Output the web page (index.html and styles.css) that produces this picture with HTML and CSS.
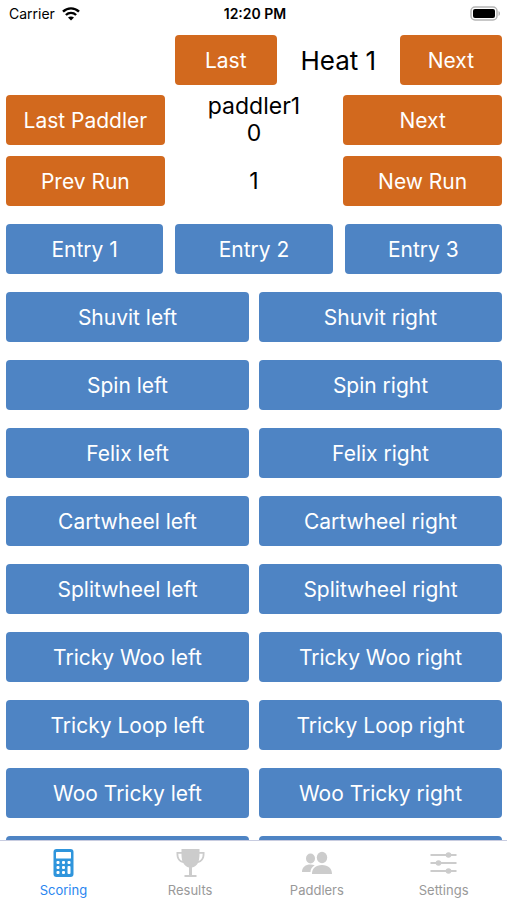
FILE: index.html
```
<!DOCTYPE html>
<html lang="en">
<head>
    <meta charset="UTF-8">
    <meta name="viewport" content="width=device-width, initial-scale=1.0">
    <title>Scoring</title>
    <link rel="stylesheet" href="styles.css">
</head>
<body>
    <header class="status-bar">
        <div class="carrier">
            <span>Carrier</span>
            <svg width="18" height="14" viewBox="0 0 18 14" fill="none" stroke="#000" stroke-width="2.4">
                <path d="M1 4.700C5.500 .2 12.500 .2 17 4.700"/>
                <path d="M3.900 8C6.800 5.200 11.200 5.200 14.100 8"/>
                <path d="M9 13.600L6 10.600C7.700 9 10.300 9 12 10.600Z" fill="#000" stroke="none"/>
            </svg>
        </div>
        <span class="time">12:20 PM</span>
        <div class="battery">
            <svg width="31" height="15" viewBox="0 0 31 15">
                <rect x="1" y="1" width="26" height="13" rx="4" fill="#fff" stroke="#b5b5b5" stroke-width="1.500"/>
                <rect x="3" y="3" width="22" height="9" rx="2" fill="#000"/>
                <path d="M28.500 5v5c2-.8 2-4.200 0-5z" fill="#b5b5b5"/>
            </svg>
        </div>
    </header>

    <main class="content">
        <!-- Heat, paddler and run selection -->
        <div class="heat-row">
            <button type="button" class="btn btn-nav">Last</button>
            <h1>Heat 1</h1>
            <button type="button" class="btn btn-nav">Next</button>
        </div>
        <div class="nav-row paddler-row">
            <button type="button" class="btn btn-nav">Last Paddler</button>
            <div class="nav-value">paddler1<br>0</div>
            <button type="button" class="btn btn-nav">Next</button>
        </div>
        <div class="nav-row">
            <button type="button" class="btn btn-nav">Prev Run</button>
            <div class="nav-value">1</div>
            <button type="button" class="btn btn-nav">New Run</button>
        </div>

        <!-- Entry moves -->
        <div class="entries">
            <button type="button" class="btn">Entry 1</button>
            <button type="button" class="btn">Entry 2</button>
            <button type="button" class="btn">Entry 3</button>
        </div>

        <!-- Moves -->
        <div class="moves">
            <button type="button" class="btn">Shuvit left</button>
            <button type="button" class="btn">Shuvit right</button>
            <button type="button" class="btn">Spin left</button>
            <button type="button" class="btn">Spin right</button>
            <button type="button" class="btn">Felix left</button>
            <button type="button" class="btn">Felix right</button>
            <button type="button" class="btn">Cartwheel left</button>
            <button type="button" class="btn">Cartwheel right</button>
            <button type="button" class="btn">Splitwheel left</button>
            <button type="button" class="btn">Splitwheel right</button>
            <button type="button" class="btn">Tricky Woo left</button>
            <button type="button" class="btn">Tricky Woo right</button>
            <button type="button" class="btn">Tricky Loop left</button>
            <button type="button" class="btn">Tricky Loop right</button>
            <button type="button" class="btn">Woo Tricky left</button>
            <button type="button" class="btn">Woo Tricky right</button>
            <button type="button" class="btn" aria-label="More moves left"></button>
            <button type="button" class="btn" aria-label="More moves right"></button>
        </div>
    </main>

    <nav class="tab-bar">
        <a href="#scoring" class="tab active">
            <svg width="32" height="30" viewBox="0 0 32 30">
                <rect x="6.500" y="1" width="20" height="28" rx="3" fill="#2f95dc"/>
                <g fill="#fff">
                    <rect x="9" y="4" width="15" height="6.500" rx=".5"/>
                    <rect x="9.500" y="13" width="3" height="3" rx="1"/>
                    <rect x="15" y="13" width="3" height="3" rx="1"/>
                    <rect x="20.500" y="13" width="3" height="3" rx="1"/>
                    <rect x="9.500" y="18" width="3" height="3" rx="1"/>
                    <rect x="15" y="18" width="3" height="3" rx="1"/>
                    <rect x="9.500" y="23" width="3" height="3" rx="1"/>
                    <rect x="15" y="23" width="3" height="3" rx="1"/>
                    <rect x="20.500" y="18" width="3" height="8" rx="1"/>
                </g>
            </svg>
            <span>Scoring</span>
        </a>
        <a href="#results" class="tab">
            <svg width="32" height="30" viewBox="0 0 32 30" fill="#ccc">
                <path d="M7.500 1h18v3h5v2c0 5-2.500 8-6.500 9-1.500 2.600-3.500 4-6 4.500V27h4.500v2h-12v-2H15v-7.500c-2.300-.5-4.200-1.900-5.700-4.500C5 14 2.500 11 2.500 6V4h5zM4.300 5.700c0 4 1.400 6.300 4 7.400-.5-2-.8-4.400-.8-7.400zm21.200 0c0 3-.3 5.400-.8 7.400 2.600-1.100 4-3.400 4-7.400z"/>
            </svg>
            <span>Results</span>
        </a>
        <a href="#paddlers" class="tab">
            <svg width="32" height="30" viewBox="0 0 32 30" fill="#ccc">
                <ellipse cx="9.500" cy="10.500" rx="4.500" ry="5"/>
                <ellipse cx="21" cy="9.500" rx="5.200" ry="5.700"/>
                <path d="M1 24c0-5 3.500-7.500 8.500-7.500 1.500 0 3 .3 4.200.8-2.800 1.700-4.200 4-4.200 6.700zM11 26c0-5.500 3.500-9 10-9s10 3.500 10 9z"/>
            </svg>
            <span>Paddlers</span>
        </a>
        <a href="#settings" class="tab">
            <svg width="32" height="30" viewBox="0 0 32 30" fill="#ccc">
                <path d="M2.500 6h26v2h-26zM2.500 14h26v2h-26zM2.500 22h26v2h-26z"/>
                <circle cx="20.500" cy="7" r="2.800"/>
                <circle cx="10.500" cy="15" r="2.800"/>
                <circle cx="20.500" cy="23" r="2.800"/>
            </svg>
            <span>Settings</span>
        </a>
    </nav>
</body>
</html>
```
FILE: styles.css
```
:root {
    --nav-color: #d2691e;
    --move-color: #4e84c4;
    --active-color: #2a86f0;
    --tab-color: #999999;
}

* {
    box-sizing: border-box;
}

body {
    display: flex;
    flex-direction: column;
    height: 100vh;
    margin: 0;
    background: #ffffff;
    color: #000000;
    font-family: Inter, Roboto, sans-serif;
}

.status-bar {
    display: grid;
    grid-template-columns: 1fr auto 1fr;
    align-items: center;
    flex-shrink: 0;
    height: 27px;
    padding: 0 6px 0 9px;
    font-size: 14px;
}

.carrier {
    display: flex;
    align-items: center;
    gap: 7px;
}

.time {
    font-weight: 600;
}

.battery {
    display: flex;
    justify-content: flex-end;
}

.content {
    flex: 1;
    min-height: 0;
    overflow: hidden;
    padding: 8px 5px 0 6px;
}

.btn {
    height: 50px;
    padding: 0;
    border: none;
    border-radius: 4px;
    background: var(--move-color);
    color: #ffffff;
    font-family: inherit;
    font-size: 21px;
    cursor: pointer;
}

.btn-nav {
    background: var(--nav-color);
}

.heat-row {
    display: grid;
    grid-template-columns: 5fr 6fr 5fr;
    align-items: center;
    margin-left: 34%;
}

h1 {
    margin: 0;
    font-size: 26px;
    font-weight: 400;
    text-align: center;
}

.nav-row {
    display: grid;
    grid-template-columns: 32% 36% 32%;
    align-items: center;
    margin-top: 9px;
}

.paddler-row {
    margin-top: 8px;
}

.nav-value {
    font-size: 23px;
    line-height: 27px;
    text-align: center;
}

.entries {
    display: grid;
    grid-template-columns: repeat(3, 1fr);
    gap: 12px;
    margin-top: 18px;
}

.moves {
    display: grid;
    grid-template-columns: repeat(2, 1fr);
    gap: 18px 10px;
    margin-top: 18px;
}

.tab-bar {
    display: flex;
    flex-shrink: 0;
    height: 60px;
    border-top: 1px solid #c8cce0;
    background: #ffffff;
}

.tab {
    flex: 1;
    display: flex;
    flex-direction: column;
    align-items: center;
    gap: 3px;
    padding-top: 7px;
    color: var(--tab-color);
    font-size: 13px;
    line-height: 18px;
    text-decoration: none;
}

.tab.active {
    color: var(--active-color);
}
```
